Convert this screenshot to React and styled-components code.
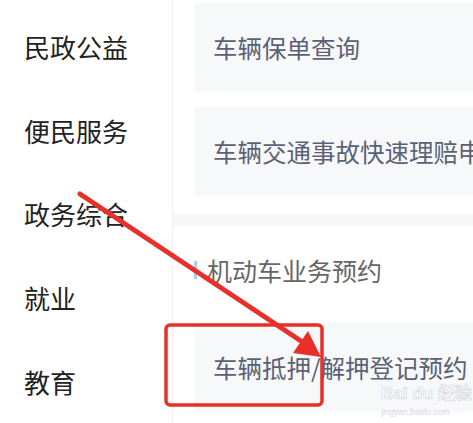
import React from 'react';
import styled, { createGlobalStyle } from 'styled-components';

const GlobalStyle = createGlobalStyle`
  html, body {
    margin: 0;
    padding: 0;
    background: #fff;
  }
  body {
    font-family: "Noto Sans CJK SC", "Noto Sans", sans-serif;
  }
`;

const Page = styled.div`
  position: relative;
  display: flex;
  width: 473px;
  height: 423px;
  overflow: hidden;
  background: #fff;
`;

const Sidebar = styled.div`
  width: 172px;
  flex-shrink: 0;
  padding-top: 5px;
  border-right: 1px solid #f0f0f2;
  display: flex;
  flex-direction: column;
`;

const NavItem = styled.div`
  height: 85px;
  display: flex;
  align-items: center;
  padding-left: 24px;
  font-size: 26px;
  color: #222;
  white-space: nowrap;
`;

const Main = styled.div`
  flex: 1;
  min-width: 0;
  display: flex;
  flex-direction: column;
  overflow: hidden;
`;

const CardList = styled.div`
  display: flex;
  flex-direction: column;
  gap: 15px;
  padding: ${p => p.top || 0}px 0 0 21px;
`;

const Card = styled.div`
  height: 89px;
  display: flex;
  align-items: center;
  padding-left: 19px;
  background: #f7f8fa;
  border-radius: 4px 0 0 4px;
  font-size: 24.5px;
  color: #5b6275;
  white-space: nowrap;
  overflow: hidden;
`;

const Band = styled.div`
  height: 12px;
  margin-top: 18px;
  background: #f6f7f9;
`;

const SectionHead = styled.div`
  display: flex;
  align-items: center;
  height: 28px;
  padding: 30px 0 0 21px;
  margin-bottom: 39px;
  font-size: 25px;
  color: #666;
  white-space: nowrap;

  &::before {
    content: "";
    width: 3px;
    height: 18px;
    margin-right: 10px;
    background: #9fd4e6;
  }
`;

const Overlay = styled.svg`
  position: absolute;
  left: 0;
  top: 0;
  pointer-events: none;
`;

const Watermark = styled.div`
  position: absolute;
  left: 381px;
  top: 384px;
  display: flex;
  flex-direction: column;
  align-items: flex-start;
  white-space: nowrap;
  pointer-events: none;
`;

const MarkLogo = styled.span`
  font-family: "Liberation Sans", "Noto Sans CJK SC", sans-serif;
  font-weight: bold;
  font-size: 17px;
  line-height: 20px;
  color: rgba(255, 255, 255, 0.5);
  -webkit-text-stroke: 0.7px rgba(200, 202, 210, 0.75);
`;

const MarkUrl = styled.span`
  font-family: "Liberation Sans", sans-serif;
  font-size: 8.5px;
  line-height: 10px;
  color: rgba(200, 202, 210, 0.75);
  margin-top: 3px;
`;

const navItems = ['民政公益', '便民服务', '政务综合', '就业', '教育'];

export default function App() {
  return (
    <>
      <GlobalStyle />
      <Page>
        <Sidebar>
          {navItems.map(n => <NavItem key={n}>{n}</NavItem>)}
        </Sidebar>
        <Main>
          <CardList top={3}>
            <Card>车辆保单查询</Card>
            <Card>车辆交通事故快速理赔申</Card>
          </CardList>
          <Band />
          <SectionHead>机动车业务预约</SectionHead>
          <CardList>
            <Card>车辆抵押/解押登记预约</Card>
          </CardList>
        </Main>

        <Watermark>
          <MarkLogo>Bai du 经验</MarkLogo>
          <MarkUrl>jingyan.baidu.com</MarkUrl>
        </Watermark>

        <Overlay width="473" height="423" viewBox="0 0 473 423">
          <rect x="166" y="325" width="156" height="80" rx="4" fill="none" stroke="#e8302a" strokeWidth="3.5" />
          <line x1="80" y1="194" x2="304" y2="343" stroke="#e8302a" strokeWidth="5" strokeLinecap="round" />
          <polygon points="321,357 293,353 308,331" fill="#e8302a" />
        </Overlay>
      </Page>
    </>
  );
}
